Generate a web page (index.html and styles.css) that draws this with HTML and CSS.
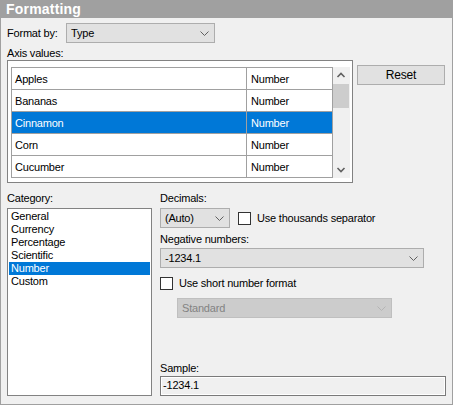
FILE: index.html
```html
<!DOCTYPE html>
<html lang="en">
<head>
    <meta charset="UTF-8">
    <title>Formatting</title>
    <link rel="stylesheet" href="styles.css">
</head>
<body>
    <div class="panel">
        <div class="panel-title">Formatting</div>

        <div class="panel-body">
            <div class="row format-row">
                <span class="format-label">Format by:</span>
                <div class="combo combo-format">
                    <span>Type</span>
                    <svg class="chevron" width="9" height="5" viewBox="0 0 9 5"><path d="M0.5 0.5 L4.5 4.5 L8.5 0.5" /></svg>
                </div>
            </div>

            <div class="label axis-label">Axis values:</div>
            <div class="row axis-row">
                <div class="group">
                    <table class="grid">
                        <tr><td class="col-name">Apples</td><td>Number</td></tr>
                        <tr><td class="col-name">Bananas</td><td>Number</td></tr>
                        <tr class="selected"><td class="col-name">Cinnamon</td><td>Number</td></tr>
                        <tr><td class="col-name">Corn</td><td>Number</td></tr>
                        <tr><td class="col-name">Cucumber</td><td>Number</td></tr>
                    </table>
                    <div class="scrollbar">
                        <svg class="arrow" width="17" height="17" viewBox="0 0 17 17"><path d="M4.5 10 L8 6.5 L11.5 10" /></svg>
                        <div class="thumb"></div>
                        <div class="track"></div>
                        <svg class="arrow" width="17" height="17" viewBox="0 0 17 17"><path d="M4.5 7 L8 10.5 L11.5 7" /></svg>
                    </div>
                </div>
                <button class="btn-reset">Reset</button>
            </div>

            <div class="row bottom-row">
                <div class="category">
                    <div class="label">Category:</div>
                    <ul class="listbox">
                        <li>General</li>
                        <li>Currency</li>
                        <li>Percentage</li>
                        <li>Scientific</li>
                        <li class="selected">Number</li>
                        <li>Custom</li>
                    </ul>
                </div>

                <div class="options">
                    <div class="label">Decimals:</div>
                    <div class="row decimals-row">
                        <div class="combo combo-decimals">
                            <span>(Auto)</span>
                            <svg class="chevron" width="9" height="5" viewBox="0 0 9 5"><path d="M0.5 0.5 L4.5 4.5 L8.5 0.5" /></svg>
                        </div>
                        <span class="checkbox"></span>
                        <span class="check-text">Use thousands separator</span>
                    </div>

                    <div class="label neg-label">Negative numbers:</div>
                    <div class="combo combo-negative">
                        <span>-1234.1</span>
                        <svg class="chevron" width="9" height="5" viewBox="0 0 9 5"><path d="M0.5 0.5 L4.5 4.5 L8.5 0.5" /></svg>
                    </div>

                    <div class="row short-row">
                        <span class="checkbox"></span>
                        <span class="check-text">Use short number format</span>
                    </div>

                    <div class="combo combo-standard disabled">
                        <span>Standard</span>
                        <svg class="chevron" width="9" height="5" viewBox="0 0 9 5"><path d="M0.5 0.5 L4.5 4.5 L8.5 0.5" /></svg>
                    </div>

                    <div class="sample">
                        <div class="label">Sample:</div>
                        <div class="sample-box">-1234.1</div>
                    </div>
                </div>
            </div>
        </div>
    </div>
</body>
</html>
```

FILE: styles.css
```css
* {
    box-sizing: border-box;
}
body {
    margin: 0;
    background-color: #f0f0f0;
    font-family: "Liberation Sans", Arial, sans-serif;
    font-size: 11px;
    letter-spacing: -0.2px;
    color: #000;
}
.panel {
    width: 453px;
    height: 405px;
    border: 1px solid #a0a0a0;
    border-top: none;
    background-color: #f0f0f0;
    display: flex;
    flex-direction: column;
}
.panel-title {
    height: 18px;
    line-height: 18px;
    margin: 0 -1px;
    padding-left: 6px;
    background-color: #a0a0a0;
    color: #fff;
    font-size: 14px;
    font-weight: bold;
    letter-spacing: 0.2px;
}
.panel-body {
    flex: 1;
    display: flex;
    flex-direction: column;
    padding: 5px 6px 8px 6px;
}
.row {
    display: flex;
    align-items: center;
}
.label {
    height: 14px;
    line-height: 14px;
}

/* combo boxes */
.combo {
    position: relative;
    height: 20px;
    line-height: 18px;
    padding-left: 4px;
    background-color: #e1e1e1;
    border: 1px solid #adadad;
}
.combo .chevron {
    position: absolute;
    right: 5px;
    top: 7px;
}
.chevron path {
    fill: none;
    stroke: #606060;
    stroke-width: 1;
}
.combo.disabled {
    background-color: #cccccc;
    border-color: #bfbfbf;
    color: #838383;
}
.combo.disabled .chevron path {
    stroke: #b4b4b4;
}

.format-label {
    width: 59px;
}
.combo-format {
    width: 149px;
}
.axis-label {
    margin-top: 3px;
}

/* axis values */
.axis-row {
    align-items: flex-start;
}
.group {
    width: 346px;
    height: 123px;
    border: 1px solid #828282;
    background-color: #fff;
    padding: 6px 2px 3px 3px;
    display: flex;
    align-items: flex-start;
}
.grid {
    width: 322px;
    border-collapse: collapse;
    table-layout: fixed;
}
.grid td {
    height: 22px;
    padding: 0 0 0 3px;
    border: 1px solid #a0a0a0;
    white-space: nowrap;
}
.grid .col-name {
    width: 235px;
}
.grid td + td {
    padding-left: 4px;
}
.grid tr.selected td {
    background-color: #0078d7;
    color: #fff;
}
.scrollbar {
    width: 17px;
    height: 111px;
    background-color: #f0f0f0;
    display: flex;
    flex-direction: column;
}
.arrow path {
    fill: none;
    stroke: #606060;
    stroke-width: 1.6;
}
.thumb {
    height: 24px;
    margin: 0 1px 0 0;
    background-color: #cdcdcd;
}
.track {
    flex: 1;
}
.btn-reset {
    width: 88px;
    height: 20px;
    margin: 5px 0 0 4px;
    padding: 0;
    background-color: #e1e1e1;
    border: 1px solid #adadad;
    font-family: inherit;
    font-size: 12px;
    letter-spacing: -0.2px;
    color: #000;
}

/* category + options */
.bottom-row {
    flex: 1;
    align-items: stretch;
    margin-top: 8px;
}
.category {
    width: 145px;
    display: flex;
    flex-direction: column;
}
.listbox {
    flex: 1;
    list-style: none;
    margin: 3px 0 0 0;
    padding: 1px 1px 0 1px;
    background-color: #fff;
    border: 1px solid #828282;
}
.listbox li {
    height: 13px;
    line-height: 13px;
    padding-left: 2px;
}
.listbox li.selected {
    background-color: #0078d7;
    color: #fff;
}
.options {
    flex: 1;
    margin-left: 8px;
    display: flex;
    flex-direction: column;
}
.decimals-row {
    margin-top: 3px;
}
.combo-decimals {
    width: 70px;
}
.checkbox {
    width: 13px;
    height: 13px;
    background-color: #fff;
    border: 1px solid #333;
    flex-shrink: 0;
}
.decimals-row .checkbox {
    margin-left: 8px;
}
.check-text {
    margin-left: 6px;
}
.neg-label {
    margin-top: 4px;
}
.combo-negative {
    width: 264px;
    margin-top: 2px;
}
.short-row {
    height: 20px;
    margin-top: 5px;
}
.short-row .check-text {
    margin-left: 6px;
}
.combo-standard {
    width: 215px;
    margin: 5px 0 0 17px;
}
.sample {
    margin-top: auto;
}
.sample .label {
    margin-bottom: 1px;
}
.sample-box {
    height: 20px;
    line-height: 16px;
    padding-left: 2px;
    border: 1px solid #7a7a7a;
    box-shadow: inset 0 0 0 1px #fff;
    background-color: #f0f0f0;
}
```
